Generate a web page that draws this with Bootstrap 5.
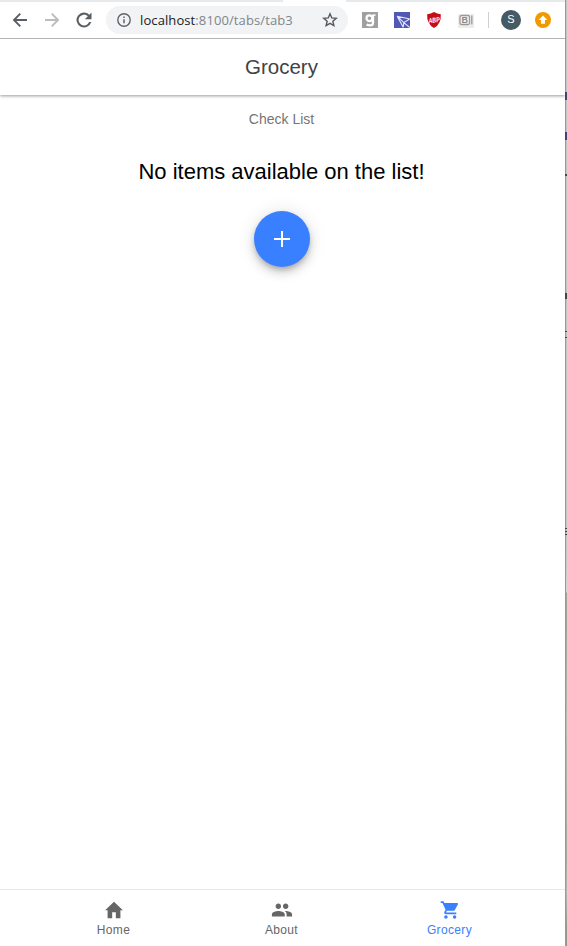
<!DOCTYPE html>
<html lang="en">
<head>
<meta charset="utf-8">
<title>Grocery</title>
<link href="https://cdn.jsdelivr.net/npm/bootstrap@5.3.0/dist/css/bootstrap.min.css" rel="stylesheet">
<style>
  body{font-family:"Liberation Sans",Arial,sans-serif;color:#000;overflow:hidden}
  svg{display:block;flex:none}
  .shell{height:946px}
  .window-edge{width:2px;background:linear-gradient(90deg,#999 50%,transparent 50%),linear-gradient(#c4c4c4 0 550px,#d4d4d4 592px,#a5a49b 593px 620px,#b9b9b2 720px,#aaa89c 860px,#b8b8b6 890px,#99958a 930px)}
  .edge-bit{left:0;width:2px;background:#45406f}
  .edge-dark{background:#444}
  .browser-bar{height:39px;border-bottom:1px solid #b4b4b4;padding:2px 0 0 10px;background:linear-gradient(90deg,#e7eaed 283px,#fff 283px 346px,#e7eaed 346px) 0 0/100% 2px no-repeat #fff}
  .nav-icons{gap:12px;width:96px}
  .address{width:242px;height:28px;background:#f1f3f4;padding:0 8px;margin-top:-1px}
  .url{font-family:"Open Sans","Noto Sans",sans-serif;font-size:13px;color:#80868b;line-height:20px;letter-spacing:.1px;margin-left:6px}
  .url b{font-weight:400;color:#202124}
  .extensions{margin-left:14px;gap:16px;margin-top:-1px}
  .divider{width:1px;height:16px;background:#d0d0d0;margin-left:-2px;margin-right:-4px}
  .avatar{width:20px;height:20px;background:#455a64;font-size:11px}
  .update-badge{margin-left:-2px}
  .app-header{height:56px;font-size:20.5px;color:#424242;box-shadow:0 1px 3px rgba(0,0,0,.4);clip-path:inset(0 0 -6px 0);padding-right:2px}
  .page-body{padding-right:2px}
  .subtitle{font-size:14px;line-height:20px;color:#757575;padding-top:14px}
  .message{font-size:22px;line-height:28px;margin-top:29px}
  .fab{width:56px;height:56px;background:#3880ff;margin-top:25px;box-shadow:0 3px 5px -1px rgba(0,0,0,.2),0 6px 10px rgba(0,0,0,.14),0 1px 18px rgba(0,0,0,.12)}
  .tabs{height:57px;border-top:1px solid #e8e8e8;padding-right:2px}
  .tab-link{width:168px;font-size:12px;line-height:14px;letter-spacing:.36px;color:#666;padding-top:9px}
  .tab-link svg{margin-bottom:2px}
  .tab-link.active{color:#3880ff}
</style>
</head>
<body>
<div class="shell d-flex bg-white">
  <div class="d-flex flex-column flex-grow-1">
    <div class="browser-bar d-flex align-items-center">
      <div class="nav-icons d-flex align-items-center">
        <svg width="20" height="20" viewBox="0 0 20 20" fill="none" stroke="#5a5e63" stroke-width="1.9"><path d="M17 10H4.500M10.300 3.700L4 10l6.300 6.300"/></svg>
        <svg width="20" height="20" viewBox="0 0 20 20" fill="none" stroke="#babcbe" stroke-width="1.900"><path d="M3 10h12.500M9.700 3.700L16 10l-6.300 6.300"/></svg>
        <svg width="20" height="20" viewBox="0 0 24 24" fill="#5a5e63"><path d="M18.400 5.600A9 9 0 1 0 20.700 14.400h-2.600A6.500 6.500 0 1 1 16.600 7.400L13 11h8V3z"/></svg>
      </div>
      <div class="address rounded-pill d-flex align-items-center">
        <svg width="20" height="20" viewBox="0 0 20 20" fill="none" stroke="#5f6368"><circle cx="10" cy="10" r="6.200" stroke-width="1.400"/><path d="M10 9.200v4M10 6.500v1.500" stroke-width="1.500"/></svg>
        <span class="url"><b>localhost</b>:8100/tabs/tab3</span>
        <svg class="ms-auto" width="20" height="20" viewBox="0 0 20 20" fill="none" stroke="#55595e" stroke-width="1.400"><path d="M10 3.800l1.750 4.100 4.500.400-3.400 2.950 1 4.350L10 13.300l-3.850 2.300 1-4.350-3.400-2.950 4.500-.400z"/></svg>
      </div>
      <div class="extensions d-flex align-items-center">
        <svg width="16" height="16" viewBox="0 0 16 16"><path fill="#a0a0a0" d="M0 0h16v16H0z"/><path d="M11 3v8q0 2.400-3 2.400-2 0-3.400-.900" fill="none" stroke="#fff" stroke-width="2.300"/><circle cx="7.400" cy="6.200" r="2.900" fill="none" stroke="#fff" stroke-width="2.200"/><path d="M10.500 2.300H13.500v1.600h-3z" fill="#fff"/></svg>
        <svg width="16" height="16" viewBox="0 0 16 16"><path fill="#5158b4" d="M0 0h16v16H0z"/><path d="M3.200 4.200L15.800 7M3.200 4.200l6 11M3.200 4.200l6.600 6.400M9.200 15.200l.600-4.600L15.800 7M9.800 10.600l6 5" fill="none" stroke="#e5e7ff" stroke-width="1.100"/></svg>
        <svg class="overflow-visible" width="16" height="16" viewBox="0 0 16 16"><path fill="#c70d12" d="M8 0q3.200 1.800 6.800 2.200.700 9.600-6.800 13.800Q.500 11.800 1.200 2.200 4.800 1.800 8 0z"/><text x="8" y="10.500" text-anchor="middle" font-size="7" font-weight="700" font-style="italic" fill="#fff" textLength="11.500" lengthAdjust="spacingAndGlyphs" transform="rotate(-8 8 8)">ABP</text></svg>
        <svg width="16" height="16" viewBox="0 0 16 16"><path fill="#ededed" d="M0 2h16v14H0z"/><rect x="2" y="3.500" width="9.500" height="9" rx="1.500" fill="#f7f7f7" stroke="#999" stroke-width="1.300"/><path d="M13.800 3.500v9" stroke="#999" stroke-width="1.300"/><text x="6.800" y="11.200" text-anchor="middle" font-size="9" font-weight="700" fill="#888">B</text></svg>
        <span class="divider"></span>
        <span class="avatar rounded-circle text-white d-flex align-items-center justify-content-center">S</span>
        <svg class="update-badge" width="16" height="16" viewBox="0 0 16 16"><circle cx="8" cy="8" r="8" fill="#f29900"/><path d="M8 3.600L12.400 8H10v3.800H6V8H3.600z" fill="#fff"/></svg>
      </div>
    </div>

    <header class="app-header d-flex align-items-center justify-content-center"><span>Grocery</span></header>

    <main class="page-body flex-grow-1 d-flex flex-column align-items-center">
      <div class="subtitle">Check List</div>
      <div class="message">No items available on the list!</div>
      <button class="fab border-0 p-0 rounded-circle d-flex align-items-center justify-content-center" aria-label="Add item">
        <svg width="16" height="16" viewBox="0 0 16 16"><path d="M7 0h2v7h7v2H9v7H7V9H0V7h7z" fill="#fff"/></svg>
      </button>
    </main>

    <nav class="tabs d-flex justify-content-center">
      <a class="tab-link d-flex flex-column align-items-center text-decoration-none" href="#">
        <svg width="22" height="22" viewBox="0 0 24 24" fill="currentColor"><path d="M10 21v-6.500h4V21h5v-8.800h2.700L12 3l-9.700 9.200H5V21z"/></svg>
        <span>Home</span>
      </a>
      <a class="tab-link d-flex flex-column align-items-center text-decoration-none" href="#">
        <svg width="22" height="22" viewBox="0 0 24 24" fill="currentColor"><path d="M16 11c1.660 0 2.990-1.340 2.990-3S17.660 5 16 5s-3 1.340-3 3 1.340 3 3 3zm-8 0c1.660 0 2.990-1.340 2.990-3S9.660 5 8 5 5 6.340 5 8s1.340 3 3 3zm0 2c-2.330 0-7 1.170-7 3.500V19h14v-2.500c0-2.330-4.670-3.500-7-3.500zm8 0c-.290 0-.620.020-.970.050 1.160.840 1.970 1.970 1.970 3.450V19h6v-2.500c0-2.330-4.670-3.500-7-3.500z"/></svg>
        <span>About</span>
      </a>
      <a class="tab-link active d-flex flex-column align-items-center text-decoration-none" href="#">
        <svg width="22" height="22" viewBox="-1 -.7 25.400 25.400" fill="currentColor"><path d="M7 18c-1.100 0-1.990.900-1.990 2S5.900 22 7 22s2-.900 2-2-.900-2-2-2zM1 2v2h2l3.600 7.590-1.350 2.450c-.160.280-.250.610-.250.960 0 1.100.900 2 2 2h12v-2H7.420c-.140 0-.250-.110-.250-.250l.030-.120.900-1.630h7.450c.750 0 1.410-.410 1.750-1.030l3.580-6.490c.080-.140.120-.310.120-.480 0-.550-.450-1-1-1H5.210l-.940-2H1z"/><circle cx="17" cy="20" r="2"/></svg>
        <span>Grocery</span>
      </a>
    </nav>
  </div>
  <div class="window-edge flex-shrink-0 position-relative">
    <i class="edge-bit position-absolute" style="top:92px;height:8px"></i>
    <i class="edge-bit position-absolute" style="top:132px;height:8px"></i>
    <i class="edge-bit edge-dark position-absolute" style="top:174px;height:2px"></i>
    <i class="edge-bit edge-dark position-absolute" style="top:293px;height:6px"></i>
    <i class="edge-bit edge-dark position-absolute" style="top:331px;height:1px"></i>
    <i class="edge-bit edge-dark position-absolute" style="top:337px;height:1px"></i>
    <i class="edge-bit edge-dark position-absolute" style="top:528px;height:1px"></i>
    <i class="edge-bit edge-dark position-absolute" style="top:531px;height:1px"></i>
    <i class="edge-bit edge-dark position-absolute" style="top:534px;height:1px"></i>
  </div>
</div>
<script src="https://cdn.jsdelivr.net/npm/bootstrap@5.3.0/dist/js/bootstrap.bundle.min.js"></script>
</body>
</html>
